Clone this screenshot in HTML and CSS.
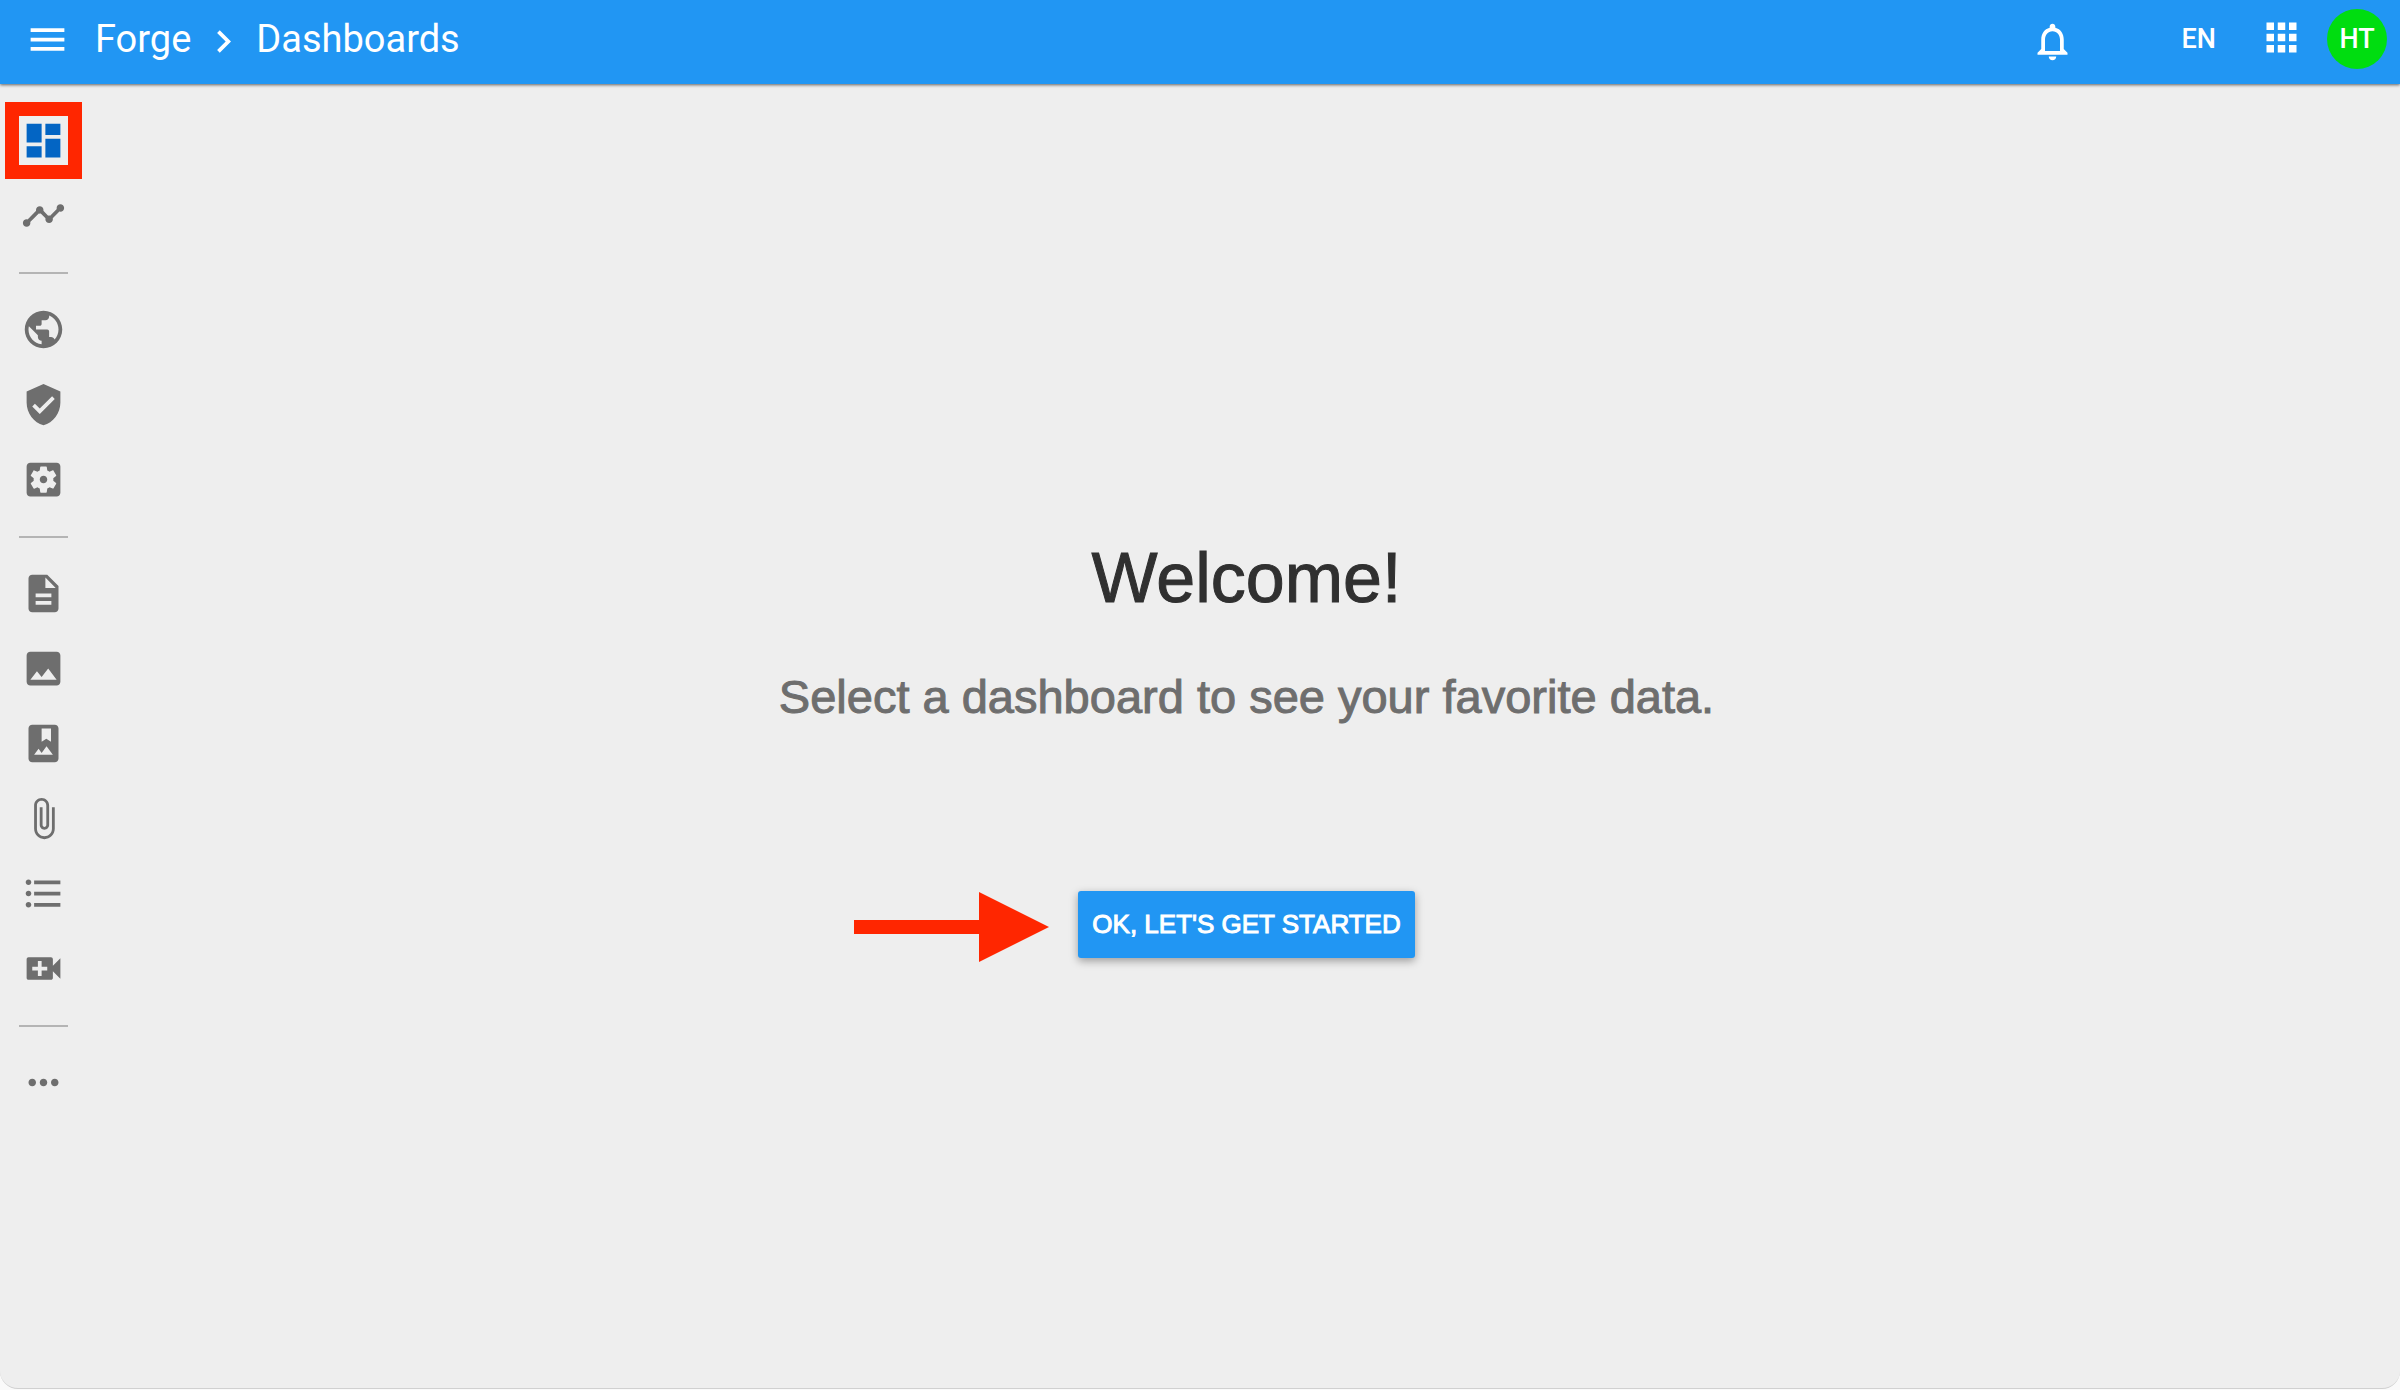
FILE: index.html
```html
<!DOCTYPE html>
<html lang="en">
<head>
<meta charset="utf-8">
<meta name="viewport" content="width=device-width, initial-scale=1">
<title>Forge - Dashboards</title>
<link rel="stylesheet" href="styles.css">
</head>
<body>
<div class="app">
  <header class="topbar">
    <button class="icon-button menu" aria-label="Menu"><svg viewBox="0 0 24 24"><path d="M3 18h18v-2H3v2zm0-5h18v-2H3v2zm0-7v2h18V6H3z"/></svg></button>
    <nav class="crumbs" aria-label="Breadcrumb">
      <a href="#">Forge</a>
      <svg viewBox="0 0 24 24"><path d="M10 6L8.59 7.41 13.17 12l-4.58 4.59L10 18l6-6z"/></svg>
      <a href="#">Dashboards</a>
    </nav>
    <div class="tools">
      <button class="icon-button bell" aria-label="Notifications"><svg viewBox="0 0 24 24"><path d="M12 22c1.100 0 2-.9 2-2h-4c0 1.100.9 2 2 2zm6-6v-5c0-3.070-1.630-5.640-4.500-6.320V4c0-.83-.67-1.500-1.500-1.500s-1.500.67-1.500 1.500v.68C7.640 5.360 6 7.920 6 11v5l-2 2v1h16v-1l-2-2zm-2 1H8v-6c0-2.480 1.510-4.500 4-4.500s4 2.020 4 4.500v6z"/></svg></button>
      <button class="lang">EN</button>
      <button class="icon-button apps" aria-label="Apps"><svg viewBox="0 0 24 24"><path d="M4 8h4V4H4v4zm6 12h4v-4h-4v4zm-6 0h4v-4H4v4zm0-6h4v-4H4v4zm6 0h4v-4h-4v4zm6-10v4h4V4h-4zm-6 4h4V4h-4v4zm6 6h4v-4h-4v4zm0 6h4v-4h-4v4z"/></svg></button>
      <button class="avatar">HT</button>
    </div>
  </header>
  <div class="body">
    <nav class="sidebar" aria-label="Main">
      <a class="item active" href="#" aria-label="Dashboards"><svg viewBox="0 0 24 24"><path d="M3 13h8V3H3v10zm0 8h8v-6H3v6zm10 0h8V11h-8v10zm0-18v6h8V3h-8z"/></svg></a>
      <a class="item" href="#" aria-label="Analytics"><svg viewBox="0 0 24 24"><path d="M23 8c0 1.100-.9 2-2 2-.18 0-.35-.02-.51-.07l-3.560 3.550c.05.16.07.34.07.52 0 1.100-.9 2-2 2s-2-.9-2-2c0-.18.02-.36.07-.52l-2.550-2.550c-.16.05-.34.07-.52.07s-.36-.02-.52-.07l-4.550 4.560c.05.16.07.33.07.51 0 1.100-.9 2-2 2s-2-.9-2-2 .9-2 2-2c.18 0 .35.02.51.07l4.560-4.550C8.020 9.360 8 9.180 8 9c0-1.100.9-2 2-2s2 .9 2 2c0 .18-.02.36-.07.52l2.550 2.550c.16-.05.34-.07.52-.07s.36.02.52.07l3.550-3.560C19.020 8.350 19 8.180 19 8c0-1.100.9-2 2-2s2 .9 2 2z"/></svg></a>
      <hr>
      <a class="item" href="#" aria-label="World"><svg viewBox="0 0 24 24"><path d="M12 2C6.480 2 2 6.480 2 12s4.480 10 10 10 10-4.480 10-10S17.520 2 12 2zm-1 17.930c-3.950-.49-7-3.850-7-7.930 0-.62.08-1.210.21-1.790L9 15v1c0 1.100.9 2 2 2v1.930zm6.900-2.540c-.26-.81-1-1.390-1.900-1.390h-1v-3c0-.55-.45-1-1-1H8v-2h2c.55 0 1-.45 1-1V7h2c1.100 0 2-.9 2-2v-.41c2.930 1.190 5 4.060 5 7.410 0 2.080-.8 3.970-2.100 5.390z"/></svg></a>
      <a class="item" href="#" aria-label="Security"><svg viewBox="0 0 24 24"><path d="M12 1L3 5v6c0 5.550 3.840 10.740 9 12 5.160-1.260 9-6.450 9-12V5l-9-4zm-2 16l-4-4 1.410-1.410L10 14.170l6.590-6.590L18 9l-8 8z"/></svg></a>
      <a class="item" href="#" aria-label="Settings"><svg viewBox="0 0 24 24"><path d="M12 10c-1.100 0-2 .9-2 2s.9 2 2 2 2-.9 2-2-.9-2-2-2zm7-7H5c-1.110 0-2 .9-2 2v14c0 1.100.89 2 2 2h14c1.110 0 2-.9 2-2V5c0-1.100-.89-2-2-2zm-1.750 9c0 .23-.02.46-.05.68l1.480 1.160c.13.11.17.3.08.45l-1.400 2.420c-.09.15-.27.21-.43.15l-1.740-.7c-.36.28-.76.51-1.180.69l-.26 1.850c-.03.17-.18.3-.35.3h-2.800c-.17 0-.32-.13-.35-.29l-.26-1.850c-.43-.18-.82-.41-1.180-.69l-1.740.7c-.16.06-.34 0-.43-.15l-1.400-2.420c-.09-.15-.05-.34.08-.45l1.480-1.160c-.03-.23-.05-.46-.05-.69s.02-.46.05-.68l-1.480-1.160c-.13-.11-.17-.3-.08-.45l1.400-2.420c.09-.15.27-.21.43-.15l1.740.7c.36-.28.76-.51 1.180-.69l.26-1.850c.03-.17.18-.3.35-.3h2.800c.17 0 .32.13.35.29l.26 1.850c.43.18.82.41 1.180.69l1.740-.7c.16-.06.34 0 .43.15l1.400 2.420c.09.15.05.34-.08.45l-1.480 1.160c.03.23.05.46.05.69z"/></svg></a>
      <hr>
      <a class="item" href="#" aria-label="Documents"><svg viewBox="0 0 24 24"><path fill-rule="evenodd" d="M14 2H6c-1.100 0-2 .9-2 2v16c0 1.100.89 2 2 2h12c1.100 0 2-.9 2-2V8l-6-6zm2.200 16H7.800v-2h8.400v2zm0-4H7.800v-2h8.400v2zM13 9V3.500L18.500 9H13z"/></svg></a>
      <a class="item" href="#" aria-label="Images"><svg viewBox="0 0 24 24"><path d="M21 19V5c0-1.100-.9-2-2-2H5c-1.100 0-2 .9-2 2v14c0 1.100.9 2 2 2h14c1.100 0 2-.9 2-2zM8.500 13.500l2.500 3.010L14.500 12l4.500 6H5l3.500-4.500z"/></svg></a>
      <a class="item" href="#" aria-label="Albums"><svg viewBox="0 0 24 24"><path fill-rule="evenodd" d="M18 2H6c-1.100 0-2 .9-2 2v16c0 1.100.9 2 2 2h12c1.100 0 2-.9 2-2V4c0-1.100-.9-2-2-2zM11 4h5v7l-2.500-1.500L11 11V4zM7 18l2.380-3.170L11 17l2.620-3.500L17 18H7z"/></svg></a>
      <a class="item" href="#" aria-label="Attachments"><svg viewBox="0 0 24 24"><path d="M16.500 6v11.500c0 2.210-1.790 4-4 4s-4-1.790-4-4V5c0-1.380 1.120-2.500 2.500-2.500s2.500 1.120 2.500 2.500v10.500c0 .55-.45 1-1 1s-1-.45-1-1V6H10v9.500c0 1.380 1.120 2.500 2.500 2.500s2.500-1.120 2.500-2.500V5c0-2.210-1.790-4-4-4S7 2.790 7 5v12.500c0 3.040 2.460 5.500 5.500 5.500s5.500-2.460 5.500-5.500V6h-1.500z"/></svg></a>
      <a class="item" href="#" aria-label="Lists"><svg viewBox="0 0 24 24"><path d="M4 10.500c-.83 0-1.500.67-1.500 1.500s.67 1.500 1.500 1.500 1.500-.67 1.500-1.500-.67-1.500-1.500-1.500zm0-6c-.83 0-1.500.67-1.500 1.500S3.170 7.500 4 7.500 5.500 6.830 5.500 6 4.830 4.500 4 4.500zm0 12c-.83 0-1.500.68-1.500 1.500s.68 1.500 1.500 1.500 1.500-.68 1.500-1.500-.67-1.500-1.500-1.500zM7 19h14v-2H7v2zm0-6h14v-2H7v2zm0-8v2h14V5H7z"/></svg></a>
      <a class="item" href="#" aria-label="Add video"><svg viewBox="0 0 24 24"><path d="M17 10.500V7c0-.55-.45-1-1-1H4c-.55 0-1 .45-1 1v10c0 .55.45 1 1 1h12c.55 0 1-.45 1-1v-3.500l4 4v-11l-4 4zM14 13h-3v3H9v-3H6v-2h3V8h2v3h3v2z"/></svg></a>
      <hr>
      <a class="item" href="#" aria-label="More"><svg viewBox="0 0 24 24"><path d="M6 10c-1.100 0-2 .9-2 2s.9 2 2 2 2-.9 2-2-.9-2-2-2zm12 0c-1.100 0-2 .9-2 2s.9 2 2 2 2-.9 2-2-.9-2-2-2zm-6 0c-1.100 0-2 .9-2 2s.9 2 2 2 2-.9 2-2-.9-2-2-2z"/></svg></a>
    </nav>
    <main class="welcome">
      <h1>Welcome!</h1>
      <p>Select a dashboard to see your favorite data.</p>
      <div class="action">
        <svg class="arrow" viewBox="0 0 195 70"><path d="M0 28h125V0l70 35-70 35V42H0z"/></svg>
        <button class="start">OK, LET'S GET STARTED</button>
      </div>
    </main>
  </div>
</div>
</body>
</html>
```
FILE: styles.css
```css
* {
  box-sizing: border-box;
}

body {
  margin: 0;
  background: #fafafa;
  font-family: "Liberation Sans", Arial, sans-serif;
}

button {
  padding: 0;
  border: 0;
  background: none;
  color: inherit;
  font: inherit;
  cursor: pointer;
}

a {
  color: inherit;
  text-decoration: none;
}

svg {
  display: block;
  width: 45px;
  height: 45px;
  flex: none;
  fill: currentColor;
}

.app {
  display: flex;
  flex-direction: column;
  min-height: calc(100vh - 1px);
  border-bottom: 1px solid #d0d0d0;
  border-radius: 0 0 18px 18px;
  background: #eee;
}

.topbar {
  display: flex;
  align-items: center;
  height: 84px;
  padding: 0 13px 6px 25px;
  background: #2196f3;
  box-shadow: 0 1px 3px rgba(0, 0, 0, 0.6);
  color: #fff;
  font-family: Roboto, sans-serif;
}

.crumbs {
  display: flex;
  align-items: center;
  gap: 10px;
  margin-left: 25px;
  font-size: 38px;
  line-height: 44px;
}

.crumbs svg {
  margin-top: 4px;
}

.tools {
  display: flex;
  align-items: center;
  margin-left: auto;
  font-size: 27px;
  font-weight: 500;
}

.bell {
  margin: 4px 107px 0 0;
}

.lang {
  margin-right: 43px;
}

.apps {
  margin: 0 23px 4px 0;
}

.avatar {
  width: 60px;
  height: 60px;
  border-radius: 50%;
  background: #00dd10;
}

.body {
  display: flex;
  flex: 1;
}

.sidebar {
  width: 86px;
  margin-right: 7px;
  padding-top: 19px;
  color: #6e6e6e;
}

.item {
  display: flex;
  align-items: center;
  justify-content: center;
  height: 75px;
}

.active {
  color: #0365c4;
}

/* Highlight frame round the current section */
.active svg {
  box-sizing: content-box;
  padding: 2px;
  border: 14px solid #ff2600;
}

.sidebar hr {
  width: 49px;
  height: 2px;
  margin: 19px auto 18px;
  border: 0;
  background: #b4b4b4;
}

.welcome {
  display: flex;
  flex: 1;
  flex-direction: column;
  align-items: center;
  padding-top: 454px;
}

h1,
p {
  margin: 0;
  font-weight: 400;
}

h1 {
  color: #303030;
  font-size: 70px;
  line-height: 80px;
  -webkit-text-stroke: 1px;
}

p {
  margin-top: 53px;
  color: #6e6e6e;
  font-size: 47px;
  line-height: 52px;
  -webkit-text-stroke: 1px;
}

.action {
  position: relative;
  margin-top: 168px;
}

.start {
  height: 67px;
  padding: 0 14px;
  border-radius: 3px;
  background: #2196f3;
  box-shadow: 0 3px 8px rgba(0, 0, 0, 0.35);
  color: #fff;
  font-size: 26px;
  -webkit-text-stroke: 1px;
}

.arrow {
  position: absolute;
  top: 1px;
  right: calc(100% + 29px);
  width: 195px;
  height: 70px;
  fill: #ff2600;
}
```
